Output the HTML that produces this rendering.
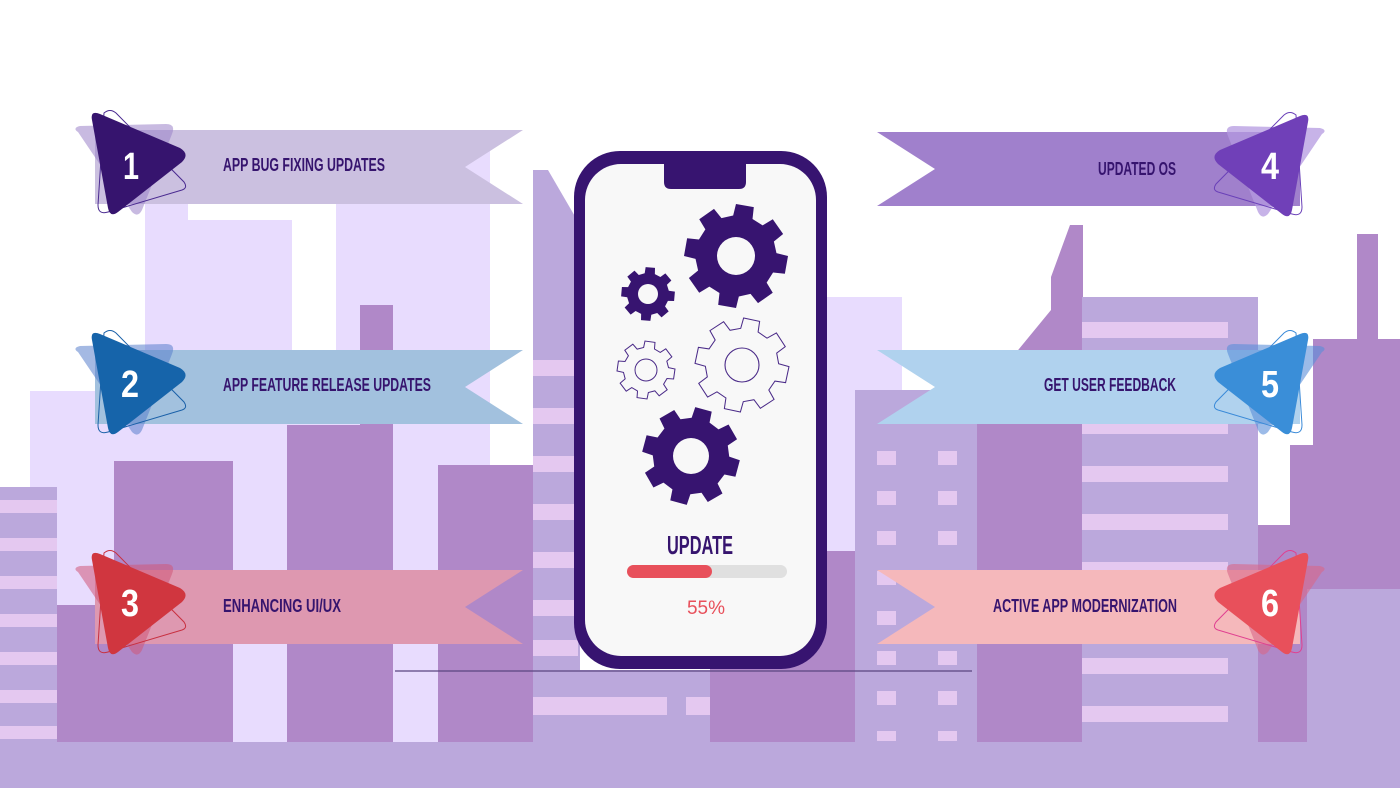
<!DOCTYPE html>
<html><head><meta charset="utf-8"><style>
html,body{margin:0;padding:0;background:#fff;}
svg{display:block}
.t{font-family:"Liberation Sans Narrow","Liberation Sans",sans-serif;font-weight:bold;fill:#36146e;}
</style></head><body>
<svg width="1400" height="788" viewBox="0 0 1400 788" xmlns="http://www.w3.org/2000/svg">
<defs>
<path id="gear" d="M.757,-.189 L.985,-.174 L.985,.174 L.757,.189 L.669,.402 L.819,.574 L.574,.819 L.402,.669 L.189,.757 L.174,.985 L-.174,.985 L-.189,.757 L-.402,.669 L-.574,.819 L-.819,.574 L-.669,.402 L-.757,.189 L-.985,.174 L-.985,-.174 L-.757,-.189 L-.669,-.402 L-.819,-.574 L-.574,-.819 L-.402,-.669 L-.189,-.757 L-.174,-.985 L.174,-.985 L.189,-.757 L.402,-.669 L.574,-.819 L.819,-.574 L.669,-.402 Z"/>
</defs>
<!-- city background -->
<rect x="145" y="203" width="147" height="540" fill="#e8dcfe"/>
<rect x="188" y="203" width="104" height="17" fill="#fff"/>
<rect x="336" y="150" width="154" height="593" fill="#e8dcfe"/>
<rect x="30" y="391" width="460" height="352" fill="#e8dcfe"/>
<rect x="360" y="305" width="33" height="438" fill="#b088c8"/>
<rect x="287" y="425" width="106" height="318" fill="#b088c8"/>
<rect x="114" y="461" width="119" height="282" fill="#b088c8"/>
<rect x="57" y="605" width="176" height="138" fill="#b088c8"/>
<rect x="438" y="465" width="95" height="278" fill="#b088c8"/>
<rect x="0" y="487" width="57" height="256" fill="#bba8dc"/>
<g fill="#e4c8f0"><rect x="0" y="500" width="57" height="13"/><rect x="0" y="538" width="57" height="13"/><rect x="0" y="576" width="57" height="13"/><rect x="0" y="614" width="57" height="13"/><rect x="0" y="652" width="57" height="13"/><rect x="0" y="690" width="57" height="13"/><rect x="0" y="726" width="57" height="13"/></g>
<polygon points="533,170 548,170 580,225 580,743 533,743" fill="#bba8dc"/>
<g fill="#e4c8f0"><rect x="533" y="360" width="45" height="16"/><rect x="533" y="408" width="45" height="16"/><rect x="533" y="456" width="45" height="16"/><rect x="533" y="504" width="45" height="16"/><rect x="533" y="552" width="45" height="16"/><rect x="533" y="600" width="45" height="16"/><rect x="533" y="640" width="45" height="16"/></g>
<rect x="710" y="297" width="192" height="446" fill="#e8dcfe"/>
<rect x="533" y="670" width="180" height="73" fill="#bba8dc"/>
<rect x="533" y="697" width="134" height="18" fill="#e4c8f0"/><rect x="686" y="697" width="27" height="18" fill="#e4c8f0"/>
<rect x="710" y="551" width="146" height="192" fill="#b088c8"/>
<rect x="855" y="390" width="122" height="353" fill="#bba8dc"/>
<g fill="#e4c8f0">
<rect x="877" y="451" width="19" height="14"/><rect x="938" y="451" width="19" height="14"/>
<rect x="877" y="491" width="19" height="14"/><rect x="938" y="491" width="19" height="14"/>
<rect x="877" y="531" width="19" height="14"/><rect x="938" y="531" width="19" height="14"/>
<rect x="877" y="571" width="19" height="14"/><rect x="938" y="571" width="19" height="14"/>
<rect x="877" y="611" width="19" height="14"/><rect x="938" y="611" width="19" height="14"/>
<rect x="877" y="651" width="19" height="14"/><rect x="938" y="651" width="19" height="14"/>
<rect x="877" y="691" width="19" height="14"/><rect x="938" y="691" width="19" height="14"/>
<rect x="877" y="731" width="19" height="10"/><rect x="938" y="731" width="19" height="10"/>
</g>
<polygon points="1070,225 1083,225 1083,743 977,743 977,400 1051,310 1051,277" fill="#b088c8"/>
<rect x="1082" y="297" width="176" height="446" fill="#bba8dc"/>
<g fill="#e4c8f0"><rect x="1082" y="322" width="146" height="16"/><rect x="1082" y="370" width="146" height="16"/><rect x="1082" y="418" width="146" height="16"/><rect x="1082" y="466" width="146" height="16"/><rect x="1082" y="514" width="146" height="16"/><rect x="1082" y="562" width="146" height="16"/><rect x="1082" y="610" width="146" height="16"/><rect x="1082" y="658" width="146" height="16"/><rect x="1082" y="706" width="146" height="16"/></g>
<rect x="1357" y="234" width="21" height="110" fill="#b088c8"/>
<rect x="1313" y="339" width="87" height="300" fill="#b088c8"/>
<rect x="1290" y="445" width="110" height="194" fill="#b088c8"/>
<rect x="1258" y="525" width="49" height="218" fill="#b088c8"/>
<rect x="1307" y="589" width="93" height="154" fill="#bba8dc"/>
<rect x="0" y="742" width="1400" height="46" fill="#bba8dc"/>
<line x1="395" y1="671" x2="972" y2="671" stroke="#5a4480" stroke-width="1.2"/>

<!-- left banners -->
<polygon points="95,130 523,130 465,167 523,204 95,204" fill="#cbc0e0"/>
<polygon points="95,350 523,350 465,387 523,424 95,424" fill="#a2c1de"/>
<polygon points="95,570 523,570 465,607 523,644 95,644" fill="#de98b0"/>
<!-- right banners -->
<polygon points="877,132 1300,132 1300,206 877,206 935,169" fill="#a080cc"/>
<polygon points="877,350 1300,350 1300,424 877,424 935,387" fill="#b0d2ee"/>
<polygon points="877,570 1300,570 1300,644 877,644 935,607" fill="#f5b8bb"/>

<!-- left triangles -->
<g>
<path d="M78,132 Q72,128 80,126 L166,124 Q176,124 172,134 L142,210 Q138,218 132,212 Z" fill="#9a82c8" opacity="0.55"/>
<path d="M104,113 Q110,108 116,113 L184,182 Q188,188 182,190 L108,212 Q98,215 98,205 Z" fill="none" stroke="#4a2a90" stroke-width="1"/>
<path d="M92,120 Q90,110 100,114 L180,148 Q190,154 182,162 L118,212 Q110,218 108,208 Z" fill="#36146e"/>
</g>
<g transform="translate(0,220)">
<path d="M78,132 Q72,128 80,126 L166,124 Q176,124 172,134 L142,210 Q138,218 132,212 Z" fill="#5a80cc" opacity="0.55"/>
<path d="M104,113 Q110,108 116,113 L184,182 Q188,188 182,190 L108,212 Q98,215 98,205 Z" fill="none" stroke="#1a60a8" stroke-width="1"/>
<path d="M92,120 Q90,110 100,114 L180,148 Q190,154 182,162 L118,212 Q110,218 108,208 Z" fill="#1664aa"/>
</g>
<g transform="translate(0,440)">
<path d="M78,132 Q72,128 80,126 L166,124 Q176,124 172,134 L142,210 Q138,218 132,212 Z" fill="#d05878" opacity="0.55"/>
<path d="M104,113 Q110,108 116,113 L184,182 Q188,188 182,190 L108,212 Q98,215 98,205 Z" fill="none" stroke="#c83040" stroke-width="1"/>
<path d="M92,120 Q90,110 100,114 L180,148 Q190,154 182,162 L118,212 Q110,218 108,208 Z" fill="#d0363f"/>
</g>
<!-- right triangles (mirror) -->
<g transform="translate(1400,2) scale(-1,1)">
<path d="M78,132 Q72,128 80,126 L166,124 Q176,124 172,134 L142,210 Q138,218 132,212 Z" fill="#b49ae0" opacity="0.75"/>
<path d="M104,113 Q110,108 116,113 L184,182 Q188,188 182,190 L108,212 Q98,215 98,205 Z" fill="none" stroke="#6a40b8" stroke-width="1"/>
<path d="M92,120 Q90,110 100,114 L180,148 Q190,154 182,162 L118,212 Q110,218 108,208 Z" fill="#7040b8"/>
</g>
<g transform="translate(1400,220) scale(-1,1)">
<path d="M78,132 Q72,128 80,126 L166,124 Q176,124 172,134 L142,210 Q138,218 132,212 Z" fill="#5a8ed8" opacity="0.6"/>
<path d="M104,113 Q110,108 116,113 L184,182 Q188,188 182,190 L108,212 Q98,215 98,205 Z" fill="none" stroke="#3a8ad8" stroke-width="1"/>
<path d="M92,120 Q90,110 100,114 L180,148 Q190,154 182,162 L118,212 Q110,218 108,208 Z" fill="#3a8ed8"/>
</g>
<g transform="translate(1400,440) scale(-1,1)">
<path d="M78,132 Q72,128 80,126 L166,124 Q176,124 172,134 L142,210 Q138,218 132,212 Z" fill="#d86888" opacity="0.6"/>
<path d="M104,113 Q110,108 116,113 L184,182 Q188,188 182,190 L108,212 Q98,215 98,205 Z" fill="none" stroke="#e04090" stroke-width="1"/>
<path d="M92,120 Q90,110 100,114 L180,148 Q190,154 182,162 L118,212 Q110,218 108,208 Z" fill="#e8505b"/>
</g>
<g fill="#fff" font-family="'Liberation Sans Narrow','Liberation Sans',sans-serif" font-weight="bold" font-size="38">
<text x="123" y="179" textLength="16" lengthAdjust="spacingAndGlyphs">1</text>
<text x="121" y="397" textLength="18" lengthAdjust="spacingAndGlyphs">2</text>
<text x="121" y="616" textLength="18" lengthAdjust="spacingAndGlyphs">3</text>
<text x="1261" y="179" textLength="18" lengthAdjust="spacingAndGlyphs">4</text>
<text x="1261" y="397" textLength="18" lengthAdjust="spacingAndGlyphs">5</text>
<text x="1261" y="616" textLength="18" lengthAdjust="spacingAndGlyphs">6</text>
</g>
<g class="t" font-size="18">
<text x="223" y="171" textLength="162" lengthAdjust="spacingAndGlyphs">APP BUG FIXING UPDATES</text>
<text x="223" y="391" textLength="208" lengthAdjust="spacingAndGlyphs">APP FEATURE RELEASE UPDATES</text>
<text x="223" y="612" textLength="118" lengthAdjust="spacingAndGlyphs">ENHANCING UI/UX</text>
<text x="1098" y="175" textLength="78" lengthAdjust="spacingAndGlyphs">UPDATED OS</text>
<text x="1044" y="391" textLength="132" lengthAdjust="spacingAndGlyphs">GET USER FEEDBACK</text>
<text x="993" y="612" textLength="184" lengthAdjust="spacingAndGlyphs">ACTIVE APP MODERNIZATION</text>
</g>

<!-- phone -->
<rect x="574" y="151" width="253" height="518" rx="46" fill="#371470"/>
<rect x="585" y="164" width="231" height="492" rx="36" fill="#f8f8f8"/>
<path d="M664,163 H746 V182 Q746,189 739,189 H671 Q664,189 664,182 Z" fill="#371470"/>
<!-- filled gears -->
<g fill="#371470">
<use href="#gear" transform="translate(736,256) scale(52) rotate(10)"/>
<use href="#gear" transform="translate(648,294) scale(27) rotate(5)"/>
<use href="#gear" transform="translate(691,456) scale(49) rotate(15)"/>
</g>
<g fill="#f8f8f8"><circle cx="736" cy="256" r="19"/><circle cx="648" cy="294" r="10"/><circle cx="691" cy="456" r="18"/></g>
<!-- outline gears -->
<g fill="none" stroke="#4a2a88">
<use href="#gear" transform="translate(742,365) scale(47) rotate(12)" stroke-width="0.022"/>
<circle cx="742" cy="365" r="17" stroke-width="1.1"/>
<use href="#gear" transform="translate(646,370) scale(29) rotate(8)" stroke-width="0.035"/>
<circle cx="646" cy="370" r="11" stroke-width="1"/>
</g>
<text x="700" y="554" text-anchor="middle" class="t" font-size="26" textLength="66" lengthAdjust="spacingAndGlyphs">UPDATE</text>
<rect x="627" y="565" width="160" height="13" rx="6.5" fill="#e0e0e0"/>
<rect x="627" y="565" width="85" height="13" rx="6.5" fill="#e8505b"/>
<text x="706" y="614" text-anchor="middle" font-family="'Liberation Sans',sans-serif" font-size="19" fill="#e8505b">55%</text>
</svg>
</body></html>
